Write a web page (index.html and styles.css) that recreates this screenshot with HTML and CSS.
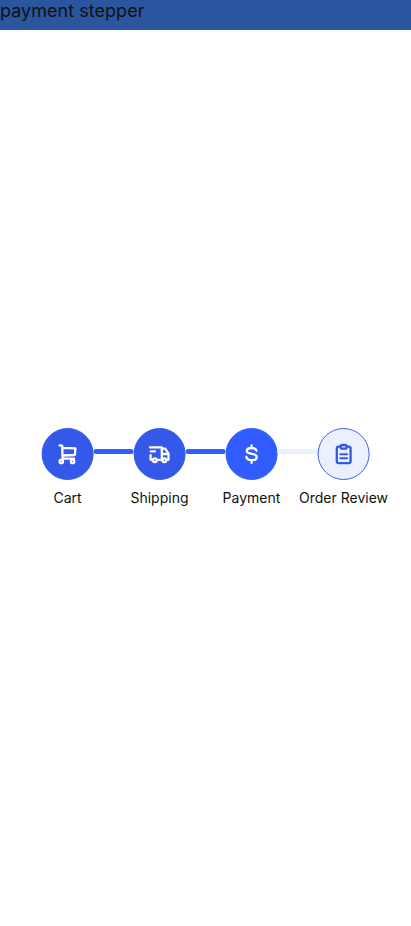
FILE: index.html
```html
<!DOCTYPE html>
<html lang="en">
<head>
<meta charset="utf-8">
<title>payment stepper</title>
<link rel="stylesheet" href="styles.css">
</head>
<body>
<header class="header">payment stepper</header>
<main class="main">
  <ol class="stepper">
    <li class="step done">
      <span class="circle"><svg class="icon" viewBox="0 0 24 24"><path d="M4 3.3 6.6 3.7 7 16.7H18.4M6.8 5.9 19.8 6.4 19.2 13 7 13.5"/><circle cx="5.7" cy="19.4" r="1.7"/><circle cx="17" cy="19.4" r="1.7"/></svg></span>
      <span class="label">Cart</span>
    </li>
    <li class="step done">
      <span class="circle"><svg class="icon" viewBox="0 0 24 24"><path d="M2.4 5.4H14.2V17.8H9.7M3.2 9.4H7.3M3 13.2V17.8H5M14.2 6.7H17.6L20.9 11.6V17.8H18.5M14.2 12H20.9M14.2 17.8H15"/><circle cx="7.2" cy="18.3" r="1.9"/><circle cx="16.7" cy="18.3" r="1.9"/></svg></span>
      <span class="label">Shipping</span>
    </li>
    <li class="step current">
      <span class="circle"><svg class="icon" viewBox="0 0 24 24"><path d="M12 3.4V6M12 18V21M17 8.7C16.5 7 15 6 12 6 9 6 7.2 7.2 7.2 9.1 7.2 13.3 17.2 10.5 17.2 15 17.2 17 15.2 18.2 12.2 18.2 9 18.2 7.2 17 6.8 15"/></svg></span>
      <span class="label">Payment</span>
    </li>
    <li class="step upcoming">
      <span class="circle"><svg class="icon" viewBox="0 0 24 24"><path d="M9 4.7H7Q5.2 4.7 5.2 6.5V19.3Q5.2 21.1 7 21.1H17.2Q19 21.1 19 19.3V6.5Q19 4.7 17.2 4.7H15"/><rect x="9" y="3" width="6.2" height="3.7" rx="1.8"/><path class="thin" d="M8.7 12.3H15.5M8.7 16.3H15.5"/></svg></span>
      <span class="label">Order Review</span>
    </li>
  </ol>
</main>
</body>
</html>
```
FILE: styles.css
```css
body {
  margin: 0;
  background: #fff;
  color: #111;
  font-family: Inter, sans-serif;
}
.header {
  box-sizing: border-box;
  height: 30px;
  background: #2a559f;
  font-size: 18px;
  line-height: 22px;
  letter-spacing: .03px;
}
.main {
  padding-top: 398px;
}
.stepper {
  display: grid;
  grid-template-columns: repeat(4, 92px);
  width: 368px;
  margin: 0 0 0 21.5px;
  padding: 0;
  list-style: none;
}
.step {
  display: grid;
  grid-template-columns: 20px 52px 20px;
  justify-items: center;
  row-gap: 9px;
}
.step::after {
  content: "";
  grid-row: 1;
  grid-column: 3;
  justify-self: start;
  width: 40px;
  height: 5px;
  margin: 21px -20px 0 0;
  border-radius: 3px;
  background: #315cff;
  transform: translateX(-.4px);
}
.step:last-child::after {
  display: none;
}
.current::after {
  background: #ebf0ff;
}
.circle {
  grid-column: 2;
  grid-row: 1;
  box-sizing: border-box;
  display: flex;
  align-items: center;
  justify-content: center;
  width: 52px;
  height: 52px;
  border: 1px solid #315cff;
  border-radius: 50%;
  background: #315cff;
  color: #fff;
  transform: translateX(-.4px);
}
.done .circle {
  background: #3459e8;
  border-color: #3459e8;
}
.upcoming .circle {
  background: #ebf0ff;
  border-color: #3e63ed;
  color: #3459e0;
}
.icon {
  width: 24px;
  height: 24px;
  fill: none;
  stroke: currentColor;
  stroke-width: 2.3;
  stroke-linecap: round;
  stroke-linejoin: round;
}
.icon .thin {
  stroke-width: 1.9;
}
.label {
  grid-column: 1 / -1;
  grid-row: 2;
  font-size: 14px;
  line-height: 18px;
  letter-spacing: .01px;
  white-space: nowrap;
}
```
